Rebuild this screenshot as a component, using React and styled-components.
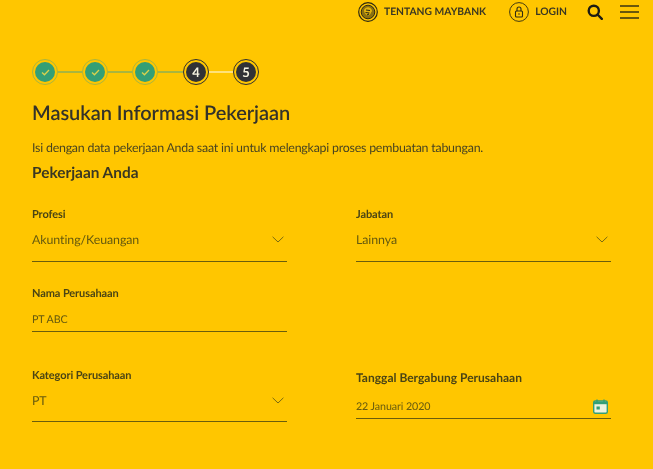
import React from "react";
import styled, { createGlobalStyle } from "styled-components";

const Global = createGlobalStyle`
  html, body { margin: 0; padding: 0; background: #ffc600; }
  body { font-family: Lato, "Open Sans", sans-serif; color: #33312a; text-rendering: geometricPrecision; }
`;
const Page = styled.div`
  width: 653px; height: 469px; overflow: hidden; background: #ffc600;
  box-sizing: border-box; filter: blur(0.25px);
`;
const Header = styled.header`
  height: 24px; display: flex; justify-content: flex-end; align-items: center;
  padding-right: 14px; color: #2b2a22;
`;
const NavItem = styled.div`
  display: flex; align-items: center; gap: 6px; margin-right: ${p => p.$mr}px;
  font-size: 10.3px; font-weight: 700; color: #3a3722;
`;
const IconBtn = styled.div`
  display: flex; margin-right: ${p => p.$mr || 0}px;
`;
const Stepper = styled.div`
  display: flex; align-items: center; margin: 35px 0 0 32px;
`;
const Step = styled.div`
  width: 26px; height: 26px; box-sizing: border-box; flex: none; border-radius: 50%;
  display: flex; align-items: center; justify-content: center;
  border: 1px solid ${p => (p.$done ? "#a9b53f" : "#2f3033")};
`;
const StepInner = styled.div`
  width: 20px; height: 20px; border-radius: 50%;
  background: ${p => (p.$done ? "#349f76" : "#313236")};
  color: #f4f1df; font-size: 13px; font-weight: 700;
  display: flex; align-items: center; justify-content: center;
`;
const Link = styled.div`
  width: ${p => p.$w}px; height: 2px; flex: none;
  background: ${p => (p.$light ? "#ffe27a" : "#a9b53f")};
`;
const Title = styled.h1`
  margin: 15px 0 0 32px; font-size: 20px; line-height: 26px; font-weight: 600; color: #33322a;
  letter-spacing: -0.04px;
`;
const Sub = styled.p`
  margin: 14px 0 0 32px; font-size: 12.4px; line-height: 16px; color: #4a4520;
  letter-spacing: -0.22px;
`;
const Section = styled.h2`
  margin: 7px 0 0 32px; font-size: 15.4px; line-height: 20px; font-weight: 700; color: #3a3722;
`;
const Grid = styled.div`
  display: grid; grid-template-columns: 255px 255px; column-gap: 69px;
  margin: 25px 0 0 32px;
`;
const Field = styled.div`
  height: ${p => p.$h}px; box-sizing: border-box; display: flex; flex-direction: column;
  padding-top: ${p => p.$pt || 0}px;
`;
const Label = styled.label`
  font-size: ${p => p.$fs || 11}px; line-height: 14px; font-weight: 700; color: #4a4414;
  letter-spacing: ${p => (p.$fs ? 0 : -0.1)}px;
`;
const Control = styled.div`
  display: flex; align-items: center; justify-content: space-between;
  height: ${p => p.$h}px; box-sizing: border-box;
  border-bottom: 1px solid #6b5d0c;
  padding: ${p => p.$pad};
  font-size: ${p => p.$fs}px; color: #665a0e; letter-spacing: -0.08px;
`;
const Chevron = () => (
  <svg width="12" height="7" viewBox="0 0 12 7" fill="none" stroke="#7a6a10" strokeWidth="1">
    <path d="M.6.8 6 6l5.400-5.200" />
  </svg>
);
const Check = () => (
  <svg width="9" height="7" viewBox="0 0 10 8" fill="none" stroke="#d9d24e" strokeWidth="1.500">
    <path d="M1 4l2.800 2.600L9 1.200" />
  </svg>
);
const Steps = () => (
  <Stepper>
    {[1, 2, 3].map(n => (
      <React.Fragment key={n}>
        <Step $done><StepInner $done><Check /></StepInner></Step>
        <Link $w={n === 3 ? 25 : 24} />
      </React.Fragment>
    ))}
    <Step><StepInner>4</StepInner></Step>
    <Link $w={24} $light />
    <Step><StepInner>5</StepInner></Step>
  </Stepper>
);

export default function App() {
  return (
    <Page>
      <Global />
      <Header>
        <NavItem $mr={23}>
          <svg width="20" height="20" viewBox="0 0 20 20" fill="none" stroke="#2e2a12">
            <circle cx="10" cy="10" r="9.300" strokeWidth="1.200" />
            <circle cx="10" cy="10" r="6.800" fill="#8a7010" strokeWidth="1" />
            <path d="M6 8c1-2 3-3 5-2.500 2 .5 3 2 3 4-1 0-1 2-2 3s-3 1.500-4 0c-1-1-2-2-2-4.500z" fill="#e2b40c" stroke="none" />
            <path d="M8 8l4 .5M7.500 10.500l4 .5M9 13l2-1" strokeWidth="1.100" />
          </svg>
          TENTANG MAYBANK
        </NavItem>
        <NavItem $mr={20}>
          <svg width="20" height="20" viewBox="0 0 20 20" fill="none" stroke="#2e2a12">
            <circle cx="10" cy="10" r="9.400" strokeWidth=".9" />
            <rect x="6.500" y="9" width="7" height="6" rx="1" strokeWidth="1.100" />
            <path d="M8 9V7a2 2 0 0 1 4 0v2M10 11.200v1.600" strokeWidth="1.100" />
          </svg>
          LOGIN
        </NavItem>
        <IconBtn $mr={17}>
          <svg width="16" height="16" viewBox="0 0 16 16" fill="none" stroke="#1d1c14" strokeWidth="2.400">
            <circle cx="6.800" cy="6.800" r="5.100" />
            <path d="M10.500 10.500l4.300 4.300" strokeLinecap="round" />
          </svg>
        </IconBtn>
        <IconBtn>
          <svg width="19" height="14" viewBox="0 0 19 14" stroke="#3a3410" strokeWidth="1.300">
            <path d="M0 1h19M0 7h19M0 13h19" />
          </svg>
        </IconBtn>
      </Header>
      <Steps />
      <Title>Masukan Informasi Pekerjaan</Title>
      <Sub>Isi dengan data pekerjaan Anda saat ini untuk melengkapi proses pembuatan tabungan.</Sub>
      <Section>Pekerjaan Anda</Section>
      <Grid>
        <Field $h={79}>
          <Label>Profesi</Label>
          <Control $h={40} $fs={12.400} $pad="0 3px 5px 0">Akunting/Keuangan<Chevron /></Control>
        </Field>
        <Field $h={79}>
          <Label>Jabatan</Label>
          <Control $h={40} $fs={12.400} $pad="0 3px 5px 0">Lainnya<Chevron /></Control>
        </Field>
        <Field $h={82}>
          <Label>Nama Perusahaan</Label>
          <Control $h={31} $fs={10.700} $pad="7px 0 0 0">PT ABC</Control>
        </Field>
        <div />
        <Field $h={60}>
          <Label>Kategori Perusahaan</Label>
          <Control $h={39} $fs={12.400} $pad="0 3px 4px 0">PT<Chevron /></Control>
        </Field>
        <Field $h={60} $pt={2}>
          <Label $fs={12}>Tanggal Bergabung Perusahaan</Label>
          <Control $h={34} $fs={10.700} $pad="10px 3px 0 0">
            22 Januari 2020
            <svg width="15" height="15" viewBox="0 0 15 15">
              <rect x=".7" y="2" width="13.600" height="12.300" rx="1.500" fill="#eef3df" stroke="#349f76" strokeWidth="1.400" />
              <path d="M1 2.500h13v2.700H1z" fill="#349f76" />
              <path d="M4 .5v2.500M11 .5v2.500" stroke="#349f76" strokeWidth="1.400" />
              <rect x="3.500" y="7.500" width="3.300" height="3" fill="#349f76" />
            </svg>
          </Control>
        </Field>
      </Grid>
    </Page>
  );
}
